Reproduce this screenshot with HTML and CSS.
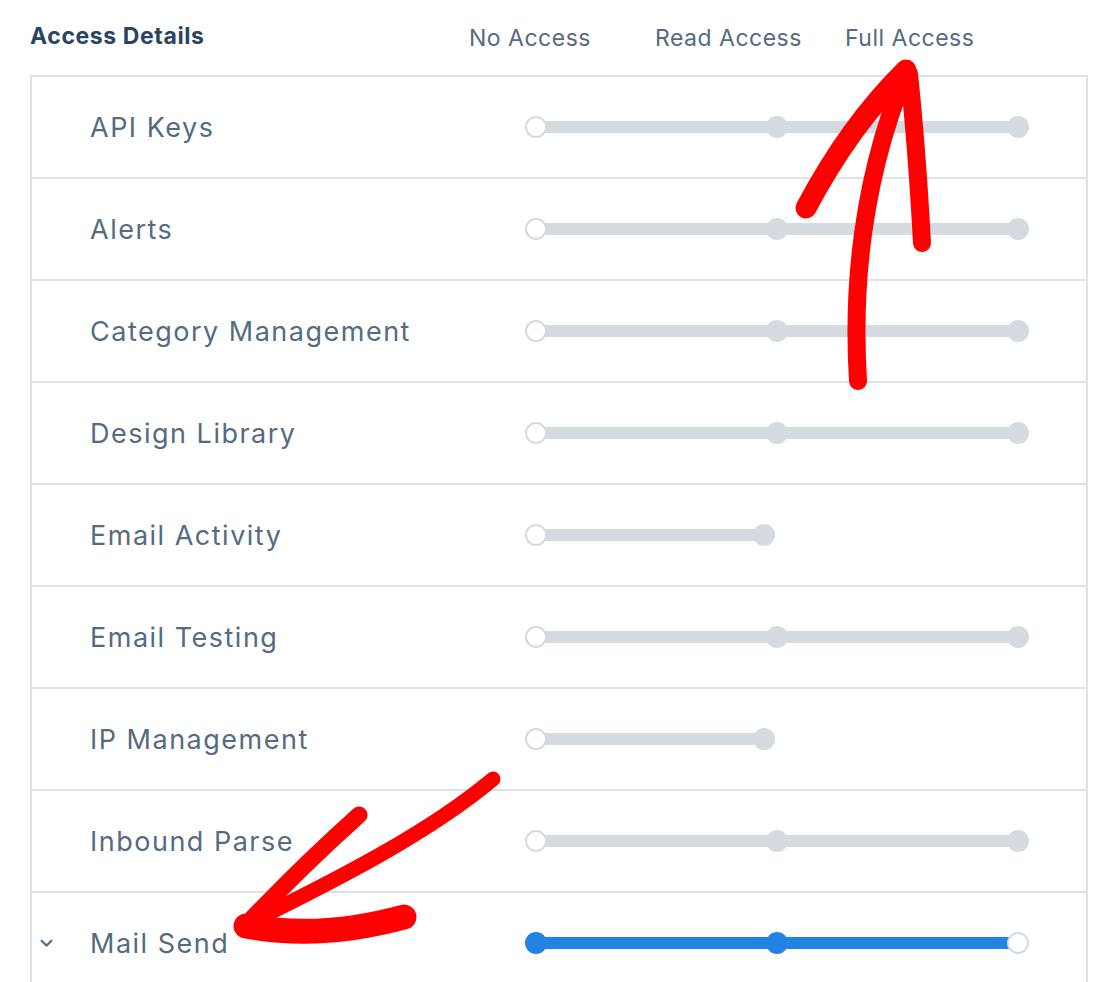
FILE: index.html
```
<html lang="en">
<head>
    <meta charset="UTF-8">
    <meta name="viewport" content="width=device-width, initial-scale=1.0">
    <title>Access Details</title>
    <link rel="stylesheet" href="styles.css">
</head>
<body>
    <div class="header">
        <h2 class="title">Access Details</h2>
        <span class="level">No Access</span>
        <span class="level">Read Access</span>
        <span class="level">Full Access</span>
    </div>

    <div class="scopes">
        <div class="row">
            <div class="name"><span class="toggle"></span>API Keys</div>
            <div class="slider"><i class="dot empty"></i><b class="bar"></b><i class="dot"></i><b class="bar"></b><i class="dot"></i></div>
        </div>
        <div class="row">
            <div class="name"><span class="toggle"></span>Alerts</div>
            <div class="slider"><i class="dot empty"></i><b class="bar"></b><i class="dot"></i><b class="bar"></b><i class="dot"></i></div>
        </div>
        <div class="row">
            <div class="name"><span class="toggle"></span>Category Management</div>
            <div class="slider"><i class="dot empty"></i><b class="bar"></b><i class="dot"></i><b class="bar"></b><i class="dot"></i></div>
        </div>
        <div class="row">
            <div class="name"><span class="toggle"></span>Design Library</div>
            <div class="slider"><i class="dot empty"></i><b class="bar"></b><i class="dot"></i><b class="bar"></b><i class="dot"></i></div>
        </div>
        <div class="row">
            <div class="name"><span class="toggle"></span>Email Activity</div>
            <div class="slider short"><i class="dot empty"></i><b class="bar"></b><i class="dot"></i></div>
        </div>
        <div class="row">
            <div class="name"><span class="toggle"></span>Email Testing</div>
            <div class="slider"><i class="dot empty"></i><b class="bar"></b><i class="dot"></i><b class="bar"></b><i class="dot"></i></div>
        </div>
        <div class="row">
            <div class="name"><span class="toggle"></span>IP Management</div>
            <div class="slider short"><i class="dot empty"></i><b class="bar"></b><i class="dot"></i></div>
        </div>
        <div class="row">
            <div class="name"><span class="toggle"></span>Inbound Parse</div>
            <div class="slider"><i class="dot empty"></i><b class="bar"></b><i class="dot"></i><b class="bar"></b><i class="dot"></i></div>
        </div>
        <div class="row">
            <div class="name">
                <span class="toggle">
                    <svg width="13" height="8" viewBox="0 0 13 8"><path d="M1 1.2 L6.5 6.5 L12 1.2" fill="none" stroke="#546b81" stroke-width="2.2"/></svg>
                </span>Mail Send
            </div>
            <div class="slider on"><i class="dot"></i><b class="bar"></b><i class="dot"></i><b class="bar"></b><i class="dot empty"></i></div>
        </div>
    </div>

    <!-- hand drawn arrows -->
    <svg class="marks" width="1116" height="982" viewBox="0 0 1116 982">
        <g fill="none" stroke="#ff0000" stroke-linecap="round" stroke-linejoin="round">
            <path d="M858 381 C 853 300, 858 190, 906 72" stroke-width="18"/>
            <path d="M806 208 Q 850 125 906 70" stroke-width="21"/>
            <path d="M909 74 Q 917 150 922 243" stroke-width="18"/>

            <path d="M493 779 C 430 832, 340 878, 247 924" stroke-width="15"/>
            <path d="M359 815 Q 300 868 247 924" stroke-width="17"/>
            <path d="M246 926 Q 320 940 404 917" stroke-width="25"/>
        </g>
    </svg>
</body>
</html>
```

FILE: styles.css
```
body{
    margin: 0;
    background: #fff;
    font-family: "Inter", "Roboto", sans-serif;
    color: #546b81;
}
.header{
    display: grid;
    grid-template-columns: 439px 186px 190px auto;
    align-items: center;
    height: 75px;
    padding-left: 30px;
}
.title{
    margin: 0 0 4px 0;
    font-size: 23px;
    font-weight: 700;
    letter-spacing: 0.6px;
    color: #294661;
}
.level{
    font-size: 23px;
    font-weight: 400;
    letter-spacing: 0.5px;
}
.scopes{
    margin-left: 30px;
    width: 1054px;
    border: 2px solid #dde2e6;
    border-bottom: none;
}
.row{
    display: grid;
    grid-template-columns: 493px 504px;
    align-items: center;
    height: 100px;
    border-bottom: 2px solid #dde2e6;
}
.name{
    display: flex;
    align-items: center;
    font-size: 27px;
    letter-spacing: 1.5px;
}
.toggle{
    display: flex;
    align-items: center;
    width: 50px;
    padding-left: 8px;
}
.slider{
    display: flex;
    align-items: center;
}
.slider.short{
    width: 250px;
}
.dot{
    width: 22px;
    height: 22px;
    border-radius: 50%;
    background: #d5dbe0;
    box-sizing: border-box;
    flex: none;
}
.dot.empty{
    background: #fff;
    border: 2px solid #d5dbe0;
}
.bar{
    flex: 1;
    height: 12px;
    margin: 0 -2px;
    background: #d5dbe0;
}
.slider.on .dot{
    background: #2183e2;
}
.slider.on .bar{
    background: #2183e2;
}
.slider.on .dot.empty{
    background: #fff;
    position: relative;
}
.marks{
    position: absolute;
    top: 0;
    left: 0;
    pointer-events: none;
}
```
